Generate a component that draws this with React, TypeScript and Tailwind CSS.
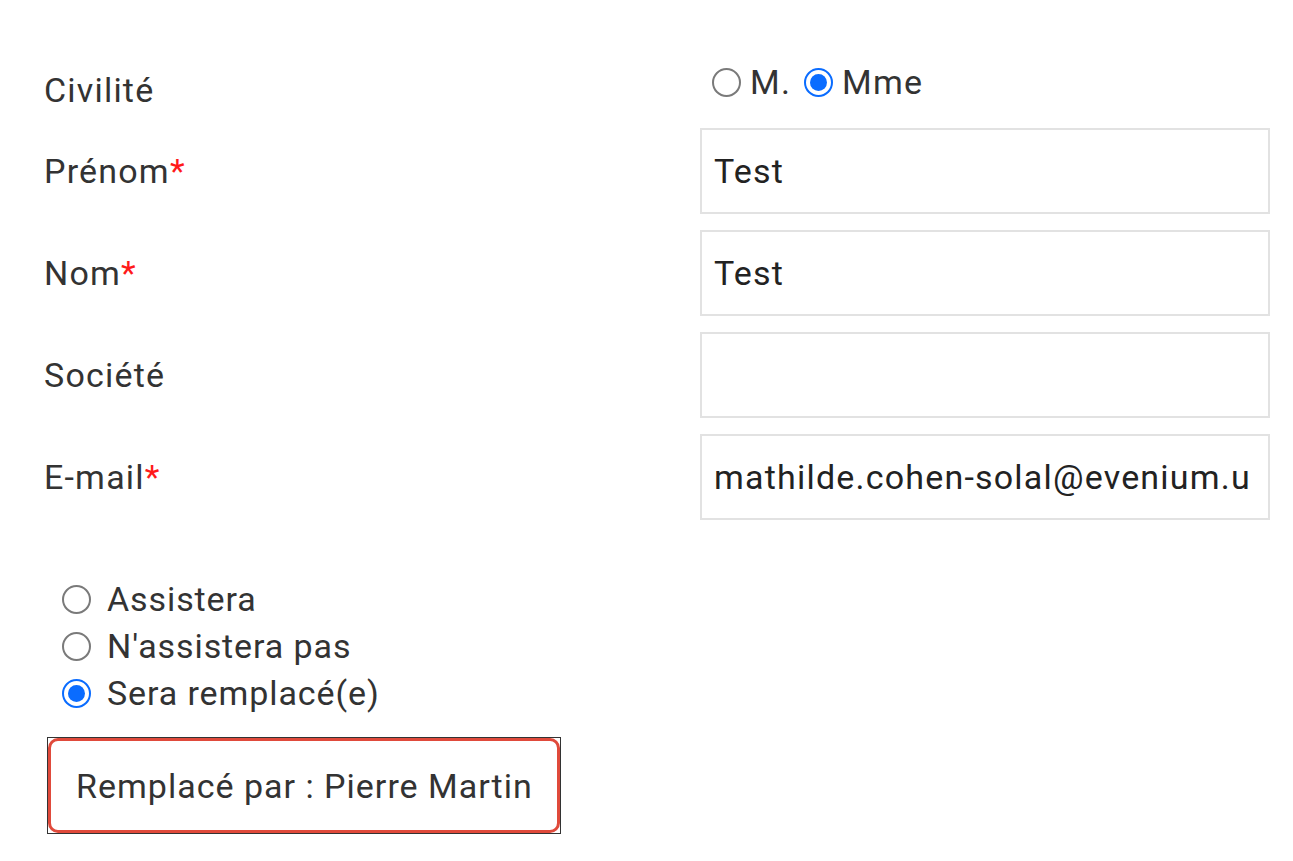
import React from "react";

type RadioProps = { checked?: boolean; label: string; className?: string; gap?: "sm" | "lg" };

function Radio({ checked, label, className, gap = "sm" }: RadioProps) {
  return (
    <label className={`flex items-center ${className ?? ""}`}>
      {checked ? (
        <span className="flex h-[29px] w-[29px] shrink-0 items-center justify-center rounded-full border-[2px] border-[#0a6cff] bg-white">
          <span className="h-[17px] w-[17px] rounded-full bg-[#0a6cff]" />
        </span>
      ) : (
        <span className="h-[29px] w-[29px] shrink-0 rounded-full border-[2px] border-[#7a7a7a] bg-white" />
      )}
      <span className={gap === "lg" ? "ml-[16px] tracking-[0.9px]" : "ml-[9px]"}>{label}</span>
    </label>
  );
}

type FieldProps = { label: string; required?: boolean; value?: string };

function Field({ label, required, value }: FieldProps) {
  return (
    <div className="grid h-[86px] grid-cols-[656px_570px] items-center">
      <div className="text-[#333]">
        {label}
        {required && <span className="text-[#ff1a1a]">*</span>}
      </div>
      <div className="flex h-[86px] items-center overflow-hidden border-[2px] border-[#e2e2e2] bg-white px-[12px] whitespace-nowrap text-[#222]">
        {value}
      </div>
    </div>
  );
}

export default function App() {
  return (
    <div
      className="min-h-[861px] bg-white pt-[54px] pl-[44px] text-[34px] leading-none tracking-[1.2px]"
      style={{ fontFamily: "Roboto, 'Liberation Sans', sans-serif" }}
    >
      <div className="grid h-[56px] grid-cols-[656px_570px] items-center">
        <div className="mt-[16px] text-[#333]">Civilité</div>
        <div className="flex items-center pl-[12px] text-[#333]">
          <Radio label="M." />
          <Radio label="Mme" checked className="ml-[13px]" />
        </div>
      </div>
      <div className="mt-[18px] flex flex-col gap-[16px]">
        <Field label="Prénom" required value="Test" />
        <Field label="Nom" required value="Test" />
        <Field label="Société" />
        <Field label="E-mail" required value="mathilde.cohen-solal@evenium.u" />
      </div>
      <div className="mt-[62px] flex flex-col gap-[13px] pl-[18px] text-[#333]">
        <Radio label="Assistera" gap="lg" />
        <Radio label="N'assistera pas" gap="lg" />
        <Radio label="Sera remplacé(e)" checked gap="lg" />
      </div>
      <div className="mt-[27px] ml-[3px] w-[514px] border border-[#333]">
        <div className="flex h-[95px] items-center rounded-[10px] border-[3px] border-[#e04a3b] bg-white pl-[25px] tracking-[1px] text-[#333]">
          Remplacé par : Pierre Martin
        </div>
      </div>
    </div>
  );
}
